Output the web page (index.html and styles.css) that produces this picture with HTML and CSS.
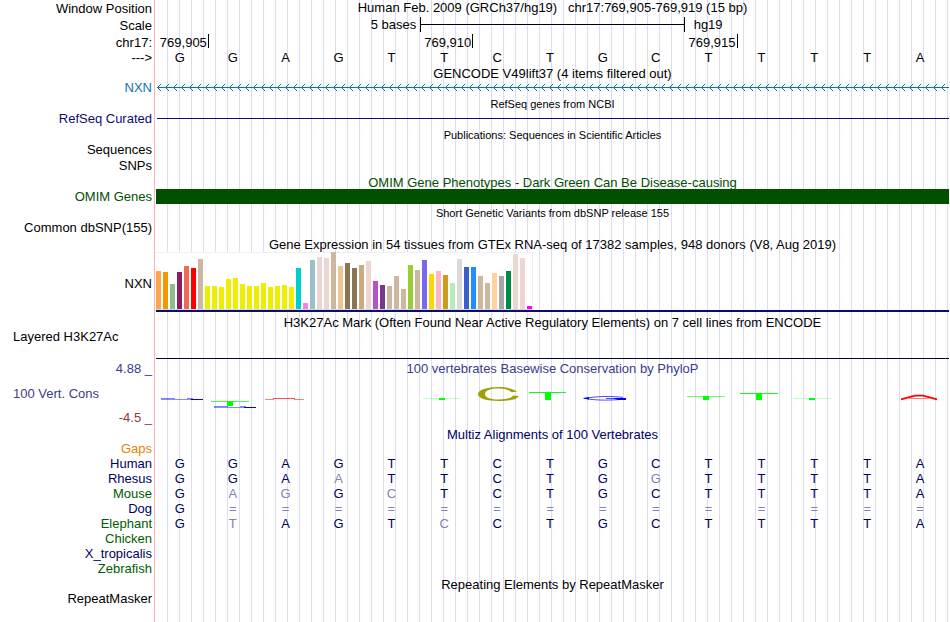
FILE: index.html
```html
<!DOCTYPE html>
<html lang="en">
<head>
<meta charset="utf-8">
<title>Genome Browser - hg19 chr17:769,905-769,919</title>
<link rel="stylesheet" href="styles.css">
</head>
<body>
<main class="browser">
  <section class="row ruler"><div class="label">Window Position</div><div class="data"><h1 class="position">Human Feb. 2009 (GRCh37/hg19) &nbsp; chr17:769,905-769,919 (15 bp)</h1></div></section>
  <section class="row ruler"><div class="label">Scale</div><div class="data scale"><span class="scale-size">5 bases</span><span class="scale-bar"></span><span class="scale-db">hg19</span></div></section>
  <section class="row coords"><div class="label">chr17:</div><div class="data ticks"><span class="tick t1">769,905</span><span class="tick t6">769,910</span><span class="tick t11">769,915</span></div></section>
  <section class="row strand"><div class="label">---&gt;</div><div class="data bases"><span>G</span><span>G</span><span>A</span><span>G</span><span>T</span><span>T</span><span>C</span><span>T</span><span>G</span><span>C</span><span>T</span><span>T</span><span>T</span><span>T</span><span>A</span></div></section>

  <section class="row"><div class="label"></div><div class="data"><h2 class="title">GENCODE V49lift37 (4 items filtered out)</h2></div></section>
  <section class="row"><div class="label gencode">NXN</div><div class="data">
    <svg class="gene" role="img" aria-label="NXN, reverse strand">
      <defs><pattern id="intron" x="1" y="0" width="8" height="15" patternUnits="userSpaceOnUse"><path class="chevron" d="M3 4h1v1h-1zM2 5h1v1h-1zM1 6h1v1h-1zM0 7h8v1h-8zM1 8h1v1h-1zM2 9h1v1h-1zM3 10h1v1h-1z"/></pattern></defs>
      <rect x="1" width="100%" height="15" fill="url(#intron)"/>
    </svg></div></section>

  <section class="row"><div class="label"></div><div class="data"><h2 class="title dense">RefSeq genes from NCBI</h2></div></section>
  <section class="row"><div class="label refseq">RefSeq Curated</div><div class="data"><div class="intron-line"></div></div></section>

  <section class="row"><div class="label"></div><div class="data"><h2 class="title dense">Publications: Sequences in Scientific Articles</h2></div></section>
  <section class="row sequences"><div class="label">Sequences</div><div class="data"></div></section>
  <section class="row"><div class="label">SNPs</div><div class="data"></div></section>

  <section class="row"><div class="label"></div><div class="data"><h2 class="title omim">OMIM Gene Phenotypes - Dark Green Can Be Disease-causing</h2></div></section>
  <section class="row"><div class="label omim">OMIM Genes</div><div class="data"><div class="omim-block"></div></div></section>

  <section class="row"><div class="label"></div><div class="data"><h2 class="title dense">Short Genetic Variants from dbSNP release 155</h2></div></section>
  <section class="row"><div class="label">Common dbSNP(155)</div><div class="data"></div></section>

  <section class="row"><div class="label"></div><div class="data"><h2 class="title">Gene Expression in 54 tissues from GTEx RNA-seq of 17382 samples, 948 donors (V8, Aug 2019)</h2></div></section>
  <section class="row gtex"><div class="label">NXN</div><div class="data"><div class="expression" id="expression"></div><div class="gene-model"></div></div></section>

  <section class="row histone"><div class="label left">Layered H3K27Ac</div><div class="data"><h2 class="title">H3K27Ac Mark (Often Found Near Active Regulatory Elements) on 7 cell lines from ENCODE</h2><div class="axis"></div></div></section>

  <section class="row conservation"><div class="label phylop"><span>4.88 _</span><span class="left">100 Vert. Cons</span><span class="minimum">-4.5 _</span></div><div class="data"><h2 class="title phylop">100 vertebrates Basewise Conservation by PhyloP</h2>
    <svg class="wiggle" viewBox="0 0 793 50" preserveAspectRatio="none" role="img" aria-label="PhyloP scores per base">
      <g fill="none" stroke="#00f">
        <path d="M5 23.5h14M31 23.5h6" stroke-opacity=".5"/><path d="M5 24.5h30" stroke-opacity=".45"/><path d="M35 24.5h12"/>
        <path d="M58 31.5h14M84 31.5h6" stroke-opacity=".5"/><path d="M58 32.5h30" stroke-opacity=".45"/><path d="M88 32.5h12"/>
        <path d="M467 22.5C460 21 438 21 430 23.5C438 25.5 456 25.5 466 24.2M450 23.5h12" stroke-opacity=".7"/>
      </g>
      <path d="M427 23l6-1v2.500l-5-.7zM457 23h13v2h-8z" fill="#00f"/>
      <g fill="none" stroke="#0f0">
        <path d="M55 26.5h38" stroke-opacity=".75"/>
        <path d="M267 23.5h37" stroke-opacity=".25"/>
        <path d="M373 17.5h37" stroke-opacity=".95"/>
        <path d="M531 21.5h38" stroke-opacity=".6"/>
        <path d="M584 18.5h38" stroke-opacity=".95"/>
        <path d="M637 23.5h38" stroke-opacity=".25"/>
      </g>
      <path d="M71 26h6v5h-6zM283 23h6v2h-6zM389 17h6v8h-6zM547 21h6v4h-6zM600 18h6v7h-6zM653 23h6v2h-6z" fill="#0f0"/>
      <path d="M361 16.8C357 13.5 349 12 343 12C331 12 322 15 322 19.3C322 23.500 331 26 343 26C353 26 361 24.5 363 21L357 20.5C356 23 350 24.5 343 24.5C335 24.5 329 23 329 19C329 15 335 13.4 343 13.4C349 13.4 353 14.8 355.500 17.3Z" fill="#a0a000"/>
      <g fill="none" stroke="red">
        <path d="M109 24.5h9M138 24.5h10" stroke-opacity=".5"/><path d="M117 23.5h22" stroke-opacity=".7"/>
        <path d="M745 24.4L759 20.6H767L781 24.4" stroke-width="1.8"/><path d="M753 23.5h20" stroke-opacity=".5"/>
      </g>
    </svg></div></section>

  <section class="row"><div class="label"></div><div class="data"><h2 class="title multiz">Multiz Alignments of 100 Vertebrates</h2></div></section>
  <section class="row"><div class="label gaps">Gaps</div><div class="data"></div></section>
  <section class="row"><div class="label multiz">Human</div><div class="data bases multiz"><span>G</span><span>G</span><span>A</span><span>G</span><span>T</span><span>T</span><span>C</span><span>T</span><span>G</span><span>C</span><span>T</span><span>T</span><span>T</span><span>T</span><span>A</span></div></section>
  <section class="row"><div class="label multiz">Rhesus</div><div class="data bases multiz"><span>G</span><span>G</span><span>A</span><span class="diff">A</span><span>T</span><span>T</span><span>C</span><span>T</span><span>G</span><span class="diff">G</span><span>T</span><span>T</span><span>T</span><span>T</span><span>A</span></div></section>
  <section class="row"><div class="label alt">Mouse</div><div class="data bases multiz"><span>G</span><span class="diff">A</span><span class="diff">G</span><span>G</span><span class="diff">C</span><span>T</span><span>C</span><span>T</span><span>G</span><span>C</span><span>T</span><span>T</span><span>T</span><span>T</span><span>A</span></div></section>
  <section class="row"><div class="label multiz">Dog</div><div class="data bases multiz"><span>G</span><span class="diff">=</span><span class="diff">=</span><span class="diff">=</span><span class="diff">=</span><span class="diff">=</span><span class="diff">=</span><span class="diff">=</span><span class="diff">=</span><span class="diff">=</span><span class="diff">=</span><span class="diff">=</span><span class="diff">=</span><span class="diff">=</span><span class="diff">=</span></div></section>
  <section class="row"><div class="label alt">Elephant</div><div class="data bases multiz"><span>G</span><span class="diff">T</span><span>A</span><span>G</span><span>T</span><span class="diff">C</span><span>C</span><span>T</span><span>G</span><span>C</span><span>T</span><span>T</span><span>T</span><span>T</span><span>A</span></div></section>
  <section class="row"><div class="label alt">Chicken</div><div class="data"></div></section>
  <section class="row"><div class="label multiz">X_tropicalis</div><div class="data"></div></section>
  <section class="row"><div class="label alt">Zebrafish</div><div class="data"></div></section>

  <section class="row"><div class="label"></div><div class="data"><h2 class="title tight">Repeating Elements by RepeatMasker</h2></div></section>
  <section class="row last"><div class="label">RepeatMasker</div><div class="data"></div></section>
</main>
<script src="expression.js"></script>
</body>
</html>
```
FILE: expression.js
```js
// Median expression per tissue: [bar height, tissue colour]
const tissues = [
  [38, "#ffa54f"], [37, "#ee9a00"], [25, "#8fbc8f"], [37, "#8b1c62"], [43, "#ee6a50"], [41, "#ff0000"],
  [50, "#cdb79e"], [23, "#eeee00"], [23, "#eeee00"], [22, "#eeee00"], [30, "#eeee00"], [31, "#eeee00"],
  [25, "#eeee00"], [23, "#eeee00"], [23, "#eeee00"], [26, "#eeee00"], [22, "#eeee00"], [23, "#eeee00"],
  [24, "#eeee00"], [22, "#eeee00"], [41, "#00cdcd"], [6, "#ee82ee"], [49, "#9ac0cd"], [52, "#eed5d2"],
  [51, "#eed5d2"], [57, "#cdb79e"], [43, "#eec591"], [46, "#8b7355"], [41, "#8b7355"], [44, "#cdaa7d"],
  [48, "#eed5d2"], [28, "#b452cd"], [24, "#7a378b"], [23, "#cdb79e"], [33, "#cdb79e"], [20, "#cdb79e"],
  [44, "#9acd32"], [39, "#cdb79e"], [49, "#7a67ee"], [35, "#ffd700"], [38, "#ffb6c1"], [34, "#cd9b1d"],
  [26, "#b4eeb4"], [50, "#d9d9d9"], [42, "#3a5fcd"], [42, "#1e90ff"], [33, "#cdb79e"], [26, "#cdb79e"],
  [36, "#ffd39b"], [33, "#a6a6a6"], [38, "#008b45"], [55, "#eed5d2"], [51, "#eed5d2"], [3, "#ff00ff"]
];
const chart = document.getElementById("expression");
for (const [height, colour] of tissues) {
  const bar = document.createElement("span");
  bar.style.height = height + "px";
  bar.style.background = colour;
  chart.append(bar);
}
```
FILE: styles.css
```css
* { box-sizing: border-box; }

body {
  margin: 0;
  background: #fff;
  color: #000;
  font: 13px/15px "Liberation Sans", Arial, sans-serif;
}

.browser {
  display: flex;
  flex-direction: column;
  min-height: 100vh;
  padding-right: 1px;
}

.row {
  display: grid;
  grid-template-columns: 154px minmax(0, 1fr);
  min-height: 15px;
}

.label {
  padding-right: 2px;
  text-align: right;
  white-space: nowrap;
}

.data {
  border-left: 1px solid #ffb4b4;
  padding-left: 1px;
  background: repeating-linear-gradient(to right, transparent 0 11px, #dcdcf8 11px 12px) content-box;
}

h1, h2 {
  margin: 0;
  font-size: 13px;
  font-weight: normal;
  text-align: center;
  white-space: nowrap;
}

.title {
  padding-top: 3px;
  line-height: 13px;
}
.title.dense {
  padding-top: 2px;
  font-size: 11px;
  line-height: 14px;
}
.title.tight { padding-top: 2px; }

/* Ruler */
.ruler, .ruler .label { line-height: 17px; }
.position { line-height: 15px; }

.scale, .ticks, .bases {
  display: grid;
  grid-template-columns: repeat(15, minmax(0, 1fr));
}
.scale-size {
  grid-column: 1 / 6;
  padding-right: 4px;
  text-align: right;
  line-height: 16px;
}
.scale-bar {
  grid-column: 6 / 11;
  height: 15px;
  border: solid #000;
  border-width: 0 1px;
  background: linear-gradient(#000, #000) 0 7px / 100% 1px no-repeat;
}
.scale-db {
  grid-column: 11 / 16;
  padding-left: 9px;
  line-height: 16px;
}

.coords { line-height: 17px; }
.tick {
  height: 14px;
  border-right: 1px solid #000;
  padding-right: 1px;
  text-align: right;
}
.t1 { grid-column: 1; }
.t6 { grid-column: 6; }
.t11 { grid-column: 11; }

.strand {
  min-height: 13px;
  line-height: 13px;
}
.bases span {
  padding-right: 5px;
  text-align: center;
}

/* Tracks */
.gencode { color: #0c72b2; }
.chevron { fill: #0c72b2; }
.gene {
  display: block;
  width: 100%;
  height: 15px;
}

.refseq { color: #0c0c78; }
.intron-line {
  margin: 7px 0 0 1px;
  height: 1px;
  background: #0c0c78;
}

.sequences { min-height: 16px; }

.omim { color: #005000; }
.omim-block {
  height: 15px;
  background: #005000;
}

.gtex .label { padding-top: 25px; }
.expression {
  display: flex;
  align-items: flex-end;
  gap: 2px;
  width: max-content;
  height: 58px;
  margin-top: 1px;
  border-right: 1px solid #f0f0f0;
  border-bottom: 1px solid #d8d8d8;
  background: linear-gradient(#f0f0f0, #f0f0f0) 0 0 / 100% 1px no-repeat #fff;
}
.expression span { width: 5px; }
.gene-model {
  height: 2px;
  background: #0c0c78;
}

.histone .data {
  display: flex;
  flex-direction: column;
  justify-content: space-between;
  min-height: 47px;
}
.histone .title { padding-top: 4px; }
.histone .label { padding-top: 17px; }
.axis {
  height: 1px;
  background: #000028;
}
.left {
  padding-left: 13px;
  text-align: left;
}

.phylop { color: #3c3c8c; }
.conservation .label {
  display: flex;
  flex-direction: column;
  justify-content: space-between;
  padding-top: 2px;
}
.minimum { color: #8c3c3c; }
.wiggle {
  display: block;
  width: 100%;
  height: 50px;
}

.gaps { color: #e68200; }
.multiz { color: #000064; }
.alt { color: #005a00; }
.diff { color: #8282b4; }

.last { flex: 1; }
```
